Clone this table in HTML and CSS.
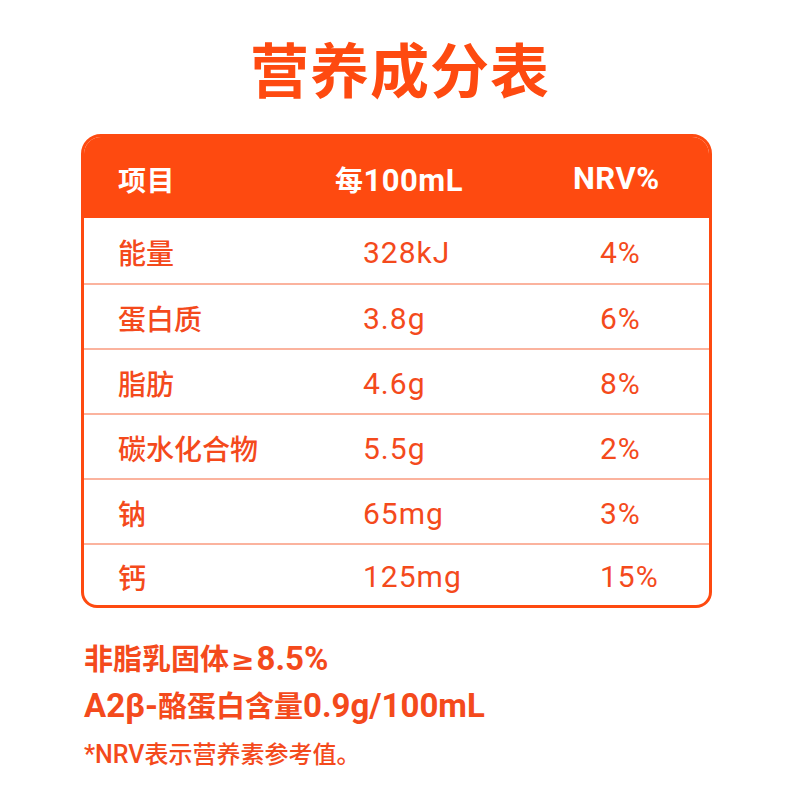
FILE: index.html
```html
<!DOCTYPE html>
<html lang="zh-CN">
<head>
<meta charset="utf-8">
<title>营养成分表</title>
<link rel="stylesheet" href="styles.css">
</head>
<body>
<main class="page">
  <h1 class="title">营养成分表</h1>
  <section class="table">
    <div class="row head">
      <div class="c1"><span class="cn">项目</span></div>
      <div class="c2"><span class="cn">每</span>100mL</div>
      <div class="c3">NRV%</div>
    </div>
    <div class="row"><div class="c1 cn">能量</div><div class="c2">328kJ</div><div class="c3">4%</div></div>
    <div class="row"><div class="c1 cn">蛋白质</div><div class="c2">3.8g</div><div class="c3">6%</div></div>
    <div class="row"><div class="c1 cn">脂肪</div><div class="c2">4.6g</div><div class="c3">8%</div></div>
    <div class="row"><div class="c1 cn">碳水化合物</div><div class="c2">5.5g</div><div class="c3">2%</div></div>
    <div class="row"><div class="c1 cn">钠</div><div class="c2">65mg</div><div class="c3">3%</div></div>
    <div class="row last"><div class="c1 cn">钙</div><div class="c2">125mg</div><div class="c3">15%</div></div>
  </section>
  <div class="notes">
    <p class="note strong"><span class="cn">非脂乳固体</span><span class="ge">≥</span>8.5%</p>
    <p class="note strong">A2β-<span class="cn">酪蛋白含量</span>0.9g/100mL</p>
    <p class="note small">*NRV<span class="cn">表示营养素参考值。</span></p>
  </div>
</main>
</body>
</html>
```
FILE: styles.css
```css
html, body {
  margin: 0;
  padding: 0;
  background: #ffffff;
}
.page {
  width: 800px;
  height: 800px;
  font-family: Roboto, "Noto Sans CJK SC", sans-serif;
  color: #f44a1c;
}
.cn {
  font-family: "Noto Sans CJK SC", sans-serif;
}
.title {
  margin: 0;
  padding-top: 38px;
  height: 60px;
  line-height: 60px;
  text-align: center;
  font-family: "Noto Sans CJK SC", sans-serif;
  font-size: 59px;
  font-weight: 700;
  color: #fe4a10;
  letter-spacing: 1px;
}
.table {
  margin: 36px 0 0 81px;
  width: 631px;
  box-sizing: border-box;
  border: 3px solid #fe4a10;
  border-radius: 20px 20px 16px 16px;
  overflow: hidden;
}
.row {
  display: grid;
  grid-template-columns: 251px 238px 1fr;
  align-items: center;
  height: 65px;
  box-sizing: border-box;
  border-top: 2px solid #fbb39e;
  font-size: 30px;
  letter-spacing: 1px;
  padding-top: 3px;
}
.row.head {
  height: 81px;
  padding-top: 2px;
  border-top: none;
  background: #fe4a10;
  color: #ffffff;
  font-weight: 700;
  font-size: 31px;
  letter-spacing: 0.5px;
}
.row.head + .row {
  border-top: none;
  height: 65px;
}
.row.last {
  height: 62px;
}
.row.head .cn {
  font-size: 28px;
}
.c1 {
  padding-left: 34px;
}
.c1.cn {
  font-size: 28px;
  font-weight: 500;
  letter-spacing: 0;
}
.c2, .c3 {
  padding-left: 0;
}
.row:not(.head) .c2 {
  padding-left: 28px;
}
.row:not(.head) .c3 {
  padding-left: 27px;
}
.notes {
  margin: 26px 0 0 84px;
}
.note {
  margin: 0;
}
.note.strong {
  font-size: 33px;
  font-weight: 700;
  height: 47px;
  line-height: 47px;
}
.note.strong .cn {
  font-size: 29px;
}
.ge {
  font-family: "DejaVu Sans", sans-serif;
  font-size: 28px;
  margin: 0 2px;
}
.note.small {
  margin-top: 5px;
  font-size: 25px;
  line-height: 40px;
  font-weight: 500;
}
.note.small .cn {
  font-size: 24px;
}
```
